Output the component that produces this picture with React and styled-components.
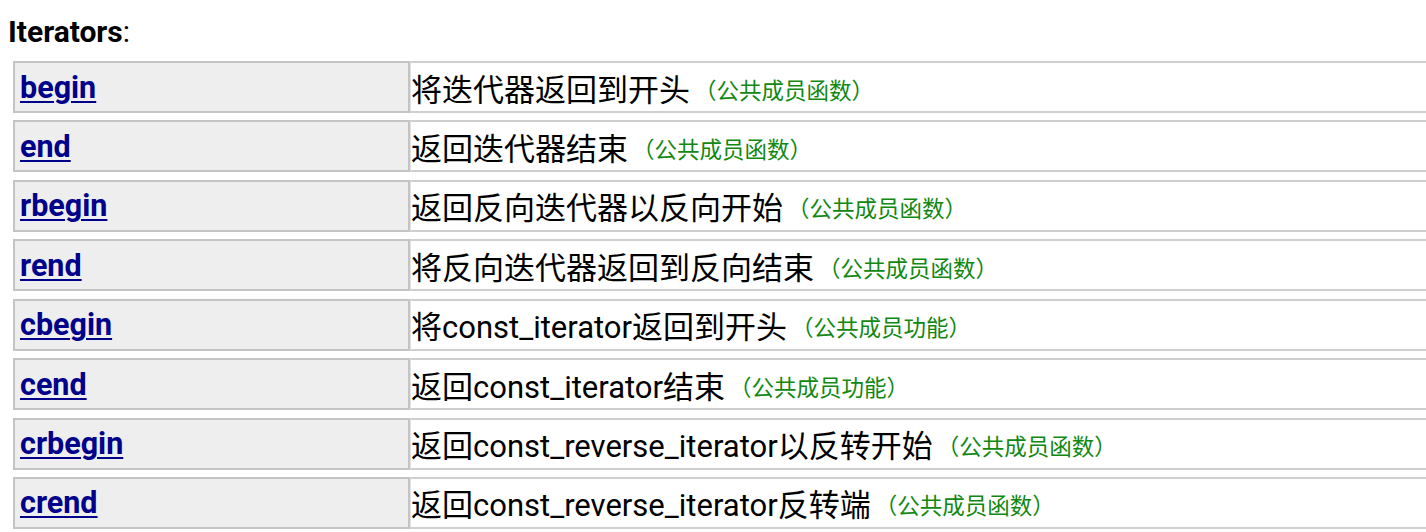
import React from 'react';
import styled, { createGlobalStyle } from 'styled-components';

const GlobalStyle = createGlobalStyle`
  html, body {
    margin: 0;
    padding: 0;
    background: #ffffff;
    overflow: hidden;
  }
  body {
    font-family: Roboto, "Noto Sans CJK SC", sans-serif;
    color: #000;
  }
`;

const Page = styled.div`
  padding: 14px 0 0 8px;
`;

const Heading = styled.div`
  font-size: 30px;
  line-height: 35px;
  height: 35px;
  margin-bottom: 12px;

  b {
    font-weight: 700;
  }
`;

const List = styled.div`
  display: flex;
  flex-direction: column;
  gap: 7.43px;
  margin-left: 5px;
`;

const Row = styled.div`
  display: grid;
  grid-template-columns: 397px 1fr;
  height: 52px;
`;

const NameCell = styled.div`
  display: flex;
  align-items: center;
  box-sizing: border-box;
  padding: 0 5px;
  background: #eeeeee;
  border: 2px solid #c4c4c4;
  font-size: 30.5px;
`;

const NameLink = styled.a`
  color: #00008b;
  font-weight: 700;
  text-decoration: underline;
  text-decoration-thickness: 2px;
  text-underline-offset: 3px;
`;

const DescCell = styled.div`
  display: flex;
  align-items: center;
  box-sizing: border-box;
  padding: 0;
  border-top: 2px solid #cfcfcf;
  border-bottom: 2px solid #cfcfcf;
  border-left: 1px solid #e2e2e2;
  font-size: 31px;
  white-space: nowrap;
  overflow: hidden;
`;

const Kind = styled.span`
  color: #118811;
  font-size: 22.5px;
  margin: 3px 0 0 4px;
`;

const iterators = [
  ['begin', '将迭代器返回到开头', '（公共成员函数）'],
  ['end', '返回迭代器结束', '（公共成员函数）'],
  ['rbegin', '返回反向迭代器以反向开始', '（公共成员函数）'],
  ['rend', '将反向迭代器返回到反向结束', '（公共成员函数）'],
  ['cbegin', '将const_iterator返回到开头', '（公共成员功能）'],
  ['cend', '返回const_iterator结束', '（公共成员功能）'],
  ['crbegin', '返回const_reverse_iterator以反转开始', '（公共成员函数）'],
  ['crend', '返回const_reverse_iterator反转端', '（公共成员函数）'],
];

const App = () => (
  <>
    <GlobalStyle />
    <Page>
      <Heading>
        <b>Iterators</b>:
      </Heading>
      <List>
        {iterators.map(([name, desc, kind]) => (
          <Row key={name}>
            <NameCell>
              <NameLink href="#">{name}</NameLink>
            </NameCell>
            <DescCell>
              {desc}
              <Kind>{kind}</Kind>
            </DescCell>
          </Row>
        ))}
      </List>
    </Page>
  </>
);

export default App;
